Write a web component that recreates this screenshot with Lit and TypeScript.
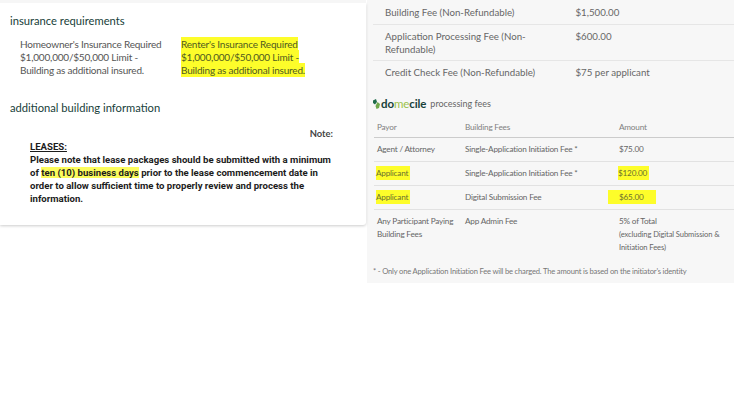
import { LitElement, html, css } from "lit";
import { customElement } from "lit/decorators.js";

@customElement("app-root")
export class AppRoot extends LitElement {
  static styles = css`
    :host { display: block; width: 734px; height: 400px; background: #fff; overflow: hidden; font-family: "Lato", "Liberation Sans", sans-serif; }
    .page { display: grid; grid-template-columns: 366px 368px; align-items: start; }
    .card { height: 222px; margin-top: 3px; background: #fff; border-radius: 0 0 3px 0; box-shadow: 0 1px 3px rgba(0,0,0,.2); padding: 10px 0 0 10px; box-sizing: border-box; position: relative; }
    .strip { position: absolute; top: -3px; left: 0; right: 0; height: 3px; background: #f6f6f6; }
    h2 { margin: 0; font-size: 11.2px; line-height: 15px; font-weight: 400; color: #17413a; }
    .ins { display: grid; grid-template-columns: 161px 1fr; margin: 10px 0 0 10px; font-size: 10px; letter-spacing: -.2px; line-height: 12.8px; color: #555; height: 39px; }
    mark { background: #fdfd2a; color: #4f5a20; padding: 1px 0; }
    .add { margin-top: 23px; }
    .note-h { text-align: right; font-size: 9.4px; line-height: 13px; font-weight: 700; color: #444; margin: 12px 33px 0 0; }
    .lease { margin: 1px 32px 0 20px; font-size: 9.6px; line-height: 12.9px; font-weight: 700; color: #1c1c1c; font-family: "Roboto", "Lato", sans-serif; }
    .lease u { display: block; }
    .lease mark { color: #1c1c1c; padding: 0; background: #fcfc5c; }
    .panel { background: #f7f7f7; margin-left: 1px; height: 283px; padding-left: 6px; box-sizing: border-box; font-size: 10px; color: #666; }
    .fee { display: grid; grid-template-columns: 190.5px 1fr; padding: 5px 0 4px 12px; line-height: 13px; border-bottom: 1px solid #e6e6e6; color: #666; font-size: 9.7px; }
    .fee.t { padding-top: 6px; padding-bottom: 5px; }
    .fee.l { border-bottom: 0; padding-bottom: 6px; }
    .brand { display: flex; align-items: center; gap: 4px; height: 21px; margin-top: 8px; color: #666; font-size: 9px; }
    .logo { display: flex; align-items: center; font-size: 11.5px; font-weight: 700; color: #17413a; letter-spacing: -.1px; }
    .logo svg { width: 7px; height: 10px; margin-right: 1px; }
    .logo i { font-style: normal; color: #9bc24a; font-weight: 400; }
    .tbl { margin: 0 0 0 1px; }
    .row { display: grid; grid-template-columns: 88px 154px 1fr; padding: 5px 0 5px 3px; line-height: 13px; font-size: 8.2px; letter-spacing: -.2px; color: #666; border-bottom: 1px solid #e2e2e2; }
    .row.head { padding: 7px 0 3px 3px; border-bottom-color: #ccc; color: #808080; }
    .row.last { border-bottom: 0; padding-bottom: 8px; }
    .row mark { color: #6b7030; padding: 2px 2px 2px 0; margin-left: -1px; }
    .row mark.wide { padding: 2px 13px 2px 11px; margin-left: -11px; }
    .sub { font-size: 7.6px; letter-spacing: -.1px; }
    .foot { font-size: 7.6px; letter-spacing: -.18px; color: #777; line-height: 12px; margin-top: 3px; }
    .amt { justify-self: start; }
  `;
  render() {
    return html`<div class="page">
      <section class="card">
        <div class="strip"></div>
        <h2>insurance requirements</h2>
        <div class="ins">
          <div>Homeowner's Insurance Required<br />$1,000,000/$50,000 Limit -<br />Building as additional insured.</div>
          <div><mark>Renter's Insurance Required</mark><br /><mark>$1,000,000/$50,000 Limit -</mark><br /><mark>Building as additional insured.</mark></div>
        </div>
        <h2 class="add">additional building information</h2>
        <div class="note-h">Note:</div>
        <div class="lease">
          <u>LEASES:</u>
          Please note that lease packages should be submitted with a minimum of <mark>ten (10) business days</mark> prior to the lease commencement date in order to allow sufficient time to properly review and process the information.
        </div>
      </section>
      <section class="panel">
        <div class="fee t"><div>Building Fee (Non-Refundable)</div><div>$1,500.00</div></div>
        <div class="fee"><div>Application Processing Fee (Non-<br />Refundable)</div><div>$600.00</div></div>
        <div class="fee l"><div>Credit Check Fee (Non-Refundable)</div><div>$75 per applicant</div></div>
        <div class="brand">
          <span class="logo">
            <svg viewBox="0 0 7 10"><path d="M0 1.5 3 0l1 3-2 2.5L0 4z" fill="#1f6b4a" /><path d="M4.5 3 7 5 6 9 3.5 10 2.5 7z" fill="#6fa84a" /></svg>
            do<i>me</i>cile
          </span>
          <span>processing fees</span>
        </div>
        <div class="tbl">
          <div class="row head"><div>Payor</div><div>Building Fees</div><div>Amount</div></div>
          <div class="row"><div>Agent / Attorney</div><div>Single-Application Initiation Fee *</div><div>$75.00</div></div>
          <div class="row"><div><mark>Applicant</mark></div><div>Single-Application Initiation Fee *</div><div class="amt"><mark>$120.00</mark></div></div>
          <div class="row"><div><mark>Applicant</mark></div><div>Digital Submission Fee</div><div class="amt"><mark class="wide">$65.00</mark></div></div>
          <div class="row last"><div>Any Participant Paying Building Fees</div><div>App Admin Fee</div><div>5% of Total<br /><span class="sub">(excluding Digital Submission &amp;<br />Initiation Fees)</span></div></div>
        </div>
        <div class="foot">* - Only one Application Initiation Fee will be charged. The amount is based on the initiator's identity</div>
      </section>
    </div>`;
  }
}
